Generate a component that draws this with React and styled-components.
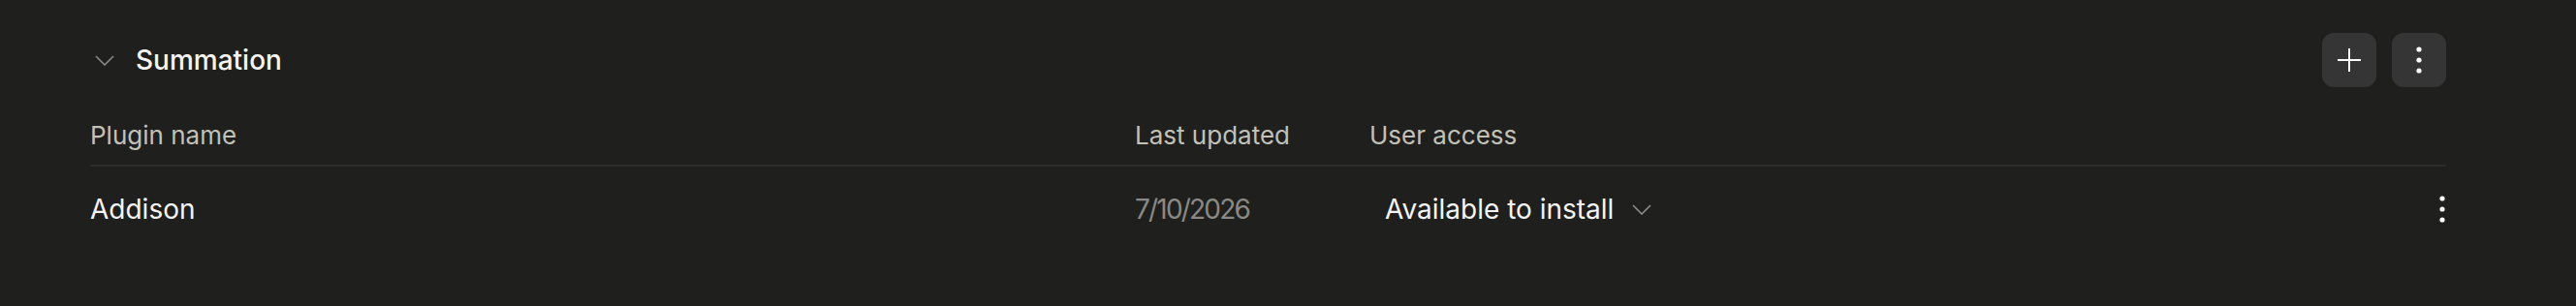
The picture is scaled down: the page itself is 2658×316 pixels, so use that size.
import styled, { createGlobalStyle } from "styled-components";

const GlobalStyle = createGlobalStyle`
  html, body {
    margin: 0;
    padding: 0;
    background: #1f1f1e;
    font-family: Inter, "Noto Sans", sans-serif;
    -webkit-font-smoothing: antialiased;
  }
`;

const Page = styled.div`
  width: 2658px;
  height: 316px;
  box-sizing: border-box;
  padding: 34px 134px 0 93px;
  background: #1f1f1e;
`;

const TitleRow = styled.div`
  display: flex;
  align-items: center;
  height: 56px;
`;

const Collapse = styled.button`
  width: 30px;
  height: 30px;
  padding: 0;
  border: none;
  background: none;
  display: flex;
  align-items: center;
  justify-content: center;
  color: #8a8a85;
  margin-right: 17px;
`;

const Title = styled.h2`
  margin: 0;
  font-size: 28px;
  font-weight: 520;
  color: #f4f4f2;
  flex: 1;
`;

const Actions = styled.div`
  display: flex;
  gap: 16px;
`;

const IconButton = styled.button`
  width: 56px;
  height: 56px;
  border: none;
  border-radius: 12px;
  background: #353535;
  color: #ffffff;
  display: flex;
  align-items: center;
  justify-content: center;
  padding: 0;
`;

const Table = styled.div`
  margin-top: 34px;
`;

const Row = styled.div`
  display: grid;
  grid-template-columns: 1078px 242px 1fr 56px;
  align-items: center;
  height: ${p => (p.head ? "48px" : "88px")};
  box-sizing: border-box;
  padding-bottom: ${p => (p.head ? "17px" : "0")};
  border-bottom: ${p => (p.head ? "2px solid #2d2d2c" : "none")};
`;

const HeadCell = styled.div`
  font-size: 26px;
  line-height: 31px;
  color: #c2c1b7;
`;

const Cell = styled.div`
  font-size: 28px;
  color: ${p => (p.muted ? "#8a8985" : "#f4f4f2")};
  letter-spacing: ${p => (p.muted ? "-1.8px" : "0")};
`;

const Select = styled.div`
  display: inline-flex;
  align-items: center;
  gap: 19px;
  padding-left: 16px;
  font-size: 28px;
  color: #f4f4f2;
`;

const RowMenu = styled.div`
  display: flex;
  justify-content: flex-end;
  padding-right: 1px;
`;

const Chevron = ({ color = "currentColor" }) => (
  <svg width="20" height="11" viewBox="0 0 20 11" fill="none">
    <path d="M1 1l9 9 9-9" stroke={color} strokeWidth="1.6" />
  </svg>
);

const Dots = () => (
  <svg width="6" height="28" viewBox="0 0 6 28">
    <circle cx="3" cy="3" r="2.6" fill="#fff" />
    <circle cx="3" cy="14" r="2.6" fill="#fff" />
    <circle cx="3" cy="25" r="2.6" fill="#fff" />
  </svg>
);

export default function App() {
  return (
    <>
      <GlobalStyle />
      <Page>
        <TitleRow>
          <Collapse>
            <Chevron />
          </Collapse>
          <Title>Summation</Title>
          <Actions>
            <IconButton>
              <svg width="24" height="24" viewBox="0 0 24 24">
                <path d="M12 0v24M0 12h24" stroke="#fff" strokeWidth="2" />
              </svg>
            </IconButton>
            <IconButton>
              <Dots />
            </IconButton>
          </Actions>
        </TitleRow>

        <Table>
          <Row head>
            <HeadCell>Plugin name</HeadCell>
            <HeadCell>Last updated</HeadCell>
            <HeadCell>User access</HeadCell>
            <div />
          </Row>
          <Row>
            <Cell>Addison</Cell>
            <Cell muted>7/10/2026</Cell>
            <div>
              <Select>
                Available to install
                <Chevron color="#8e8d88" />
              </Select>
            </div>
            <RowMenu>
              <Dots />
            </RowMenu>
          </Row>
        </Table>
      </Page>
    </>
  );
}
